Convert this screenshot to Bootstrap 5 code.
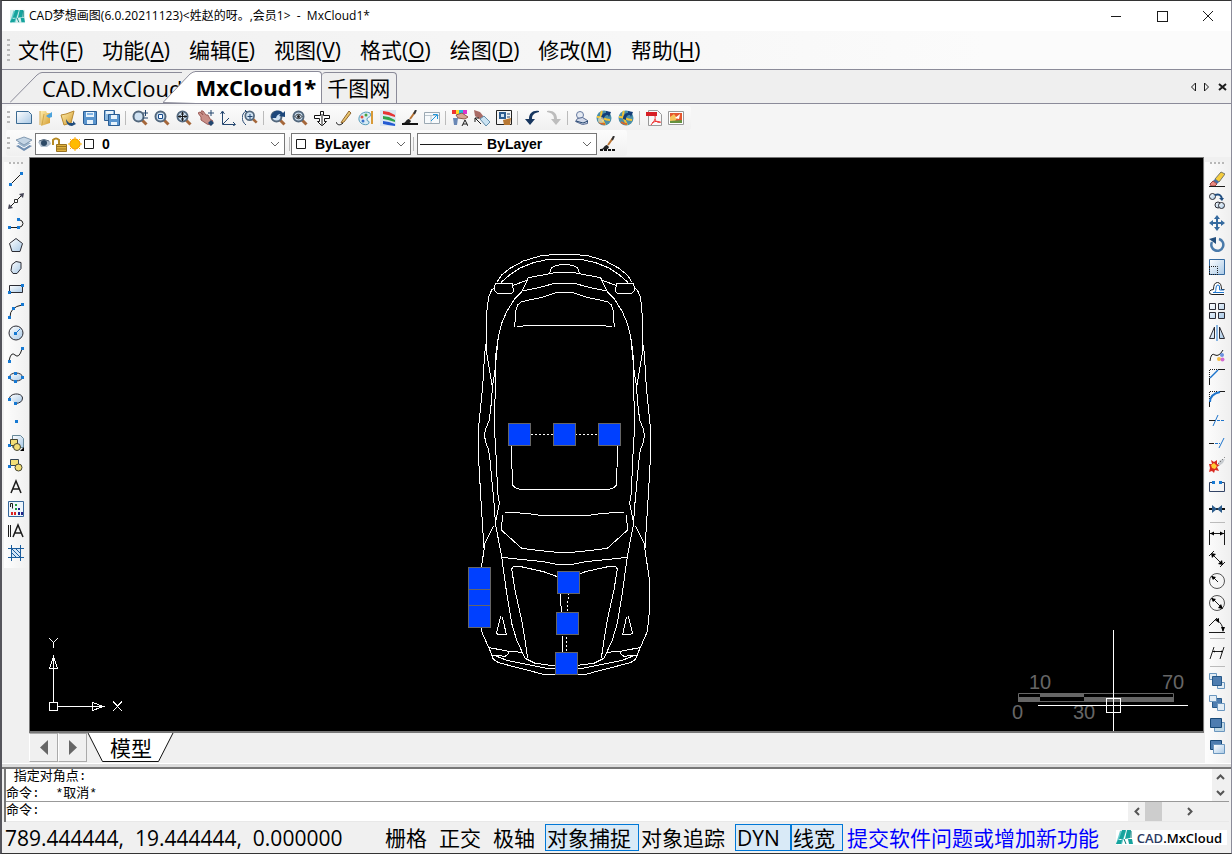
<!DOCTYPE html>
<html lang="zh-CN">
<head>
<meta charset="utf-8">
<meta name="viewport" content="width=device-width, initial-scale=1">
<title>CAD梦想画图 - MxCloud1*</title>
<link rel="stylesheet" href="https://cdn.jsdelivr.net/npm/bootstrap@5.3.0/dist/css/bootstrap.min.css">
<style>
body{font-family:"Open Sans","Noto Sans CJK SC",sans-serif;color:#000;background:#f0f0f0;overflow:hidden}
.win{border:1px solid #8b8b99;border-top-color:#333;border-left:2px solid #55555c;border-bottom-color:#333}
button{background:none;border:0;padding:0;color:inherit;font:inherit}
svg{display:block;flex:none}
.titlebar{height:30px;background:#fff;font-size:12px;padding-left:8px}
.titlebar button{width:46px;height:30px}
.menubar{height:38px;background:linear-gradient(90deg,#f0f0f0,#fbfbfb 80%);font-size:21px;line-height:38px;padding-left:5px;gap:19px}
.menubar .grip{margin-right:-11px}
.menubar a{color:#000;text-decoration:none}
.grip{width:3px;background:repeating-linear-gradient(#b8b8b8 0 2px,transparent 2px 5px)}
.hgrip{width:15px;height:2px;background:repeating-linear-gradient(90deg,#b8b8b8 0 2px,transparent 2px 4px)}
.tabstrip{height:35px;border-top:1px solid #8b8b99;border-bottom:1px solid #8b8b99;background:#efefef;padding-left:8px;font-size:22px}
.doc{height:31px;line-height:31px;white-space:nowrap}
.doc span{display:block;height:31px;border-top:1px solid #8b8b99}
.doc.active{margin-left:-19px;z-index:1;font-weight:700;height:32px}
.doc.active span{background:#fff;border-right:1px solid #8b8b99;height:32px;border-top-right-radius:4px;padding-right:5px}
.doc.box{font-size:21px}
.doc.box span{border-right:1px solid #8b8b99;border-radius:4px 4px 0 0;padding:0 6px 0 5px}
.bars{background:#f5f5f5;padding:2px 0 1px 4px;height:53px}
.bar{background:linear-gradient(#fcfcfc,#f0f0f0);border-radius:3px;height:24px;padding-left:1px}
.bar .grip{height:14px;margin-right:3px}
.bar.second{height:26px;padding-top:2px}
.tool{width:22px;height:22px;display:flex;align-items:center;justify-content:center}
.vsep{width:1px;height:14px;background:#bbb;margin:0 3px 0 2px}
.hsep{width:15px;height:1px;background:#bbb;margin:2px 0 3px}
.combo{background:#fff;border:1px solid #777;height:22px;padding-left:2px}
.combo select{appearance:none;border:0;background:transparent;font:bold 14px "Liberation Sans",sans-serif;outline:0;min-width:0;color:#000;padding:0}
.sidebar{width:27px;padding:5px 0 0 2px;background:#f0f0f0}
.sidebar .inner{background:linear-gradient(90deg,#fdfdfd,#f0f0f0);width:24px;padding-bottom:4px}
.sidebar.right{padding-left:1px}
.view{background:#000;border:1px solid #777;border-bottom-width:2px}
.sheets{height:30px}
.arrow{width:29px;height:29px;border:1px solid #aaa;border-left-color:#fff;display:flex;align-items:center;justify-content:center}
.sheet{font-size:21px;line-height:29px;height:30px;width:88px;position:relative;white-space:nowrap}
.sheet svg{position:absolute;inset:0}
.sheet span{position:relative}
.split{height:6px;background:#dcdcdc;border-top:1px solid #fff;border-bottom:2px solid #777}
.cmd{font:13px/17px "Liberation Mono","Noto Sans CJK SC",monospace;border-left:2px solid #777;margin-left:2px;margin-right:2px;background:#fff}
.log{height:33px;border-bottom:1px solid #999}
.log pre{font:inherit;overflow:hidden;margin:0}
.log .txt{margin-top:-1px}
.prompt{height:20px;border-bottom:1px solid #e8e8e8}
.prompt input{border:0;outline:0;font:inherit;min-width:0;background:transparent}
.sb{background:#f0f0f0}
.status{height:31px;font-size:21px;line-height:26px;white-space:pre;padding:2px 4px 2px 3px}
.status button{height:27px;padding:0 1px;border:1px solid transparent;white-space:nowrap}
.status button.on{background:#d9eaf7;border-color:#0078d7}
.status button.wide{padding-right:7px}
.status a{color:#00f;text-decoration:none}
.coord{width:378px}
.brandbox{background:#fff;font:600 13px/14px "Open Sans",sans-serif;height:15px;padding-right:5px}
.k{fill:none;stroke:#1c1c1c}.n{fill:none;stroke:#24466f}.b{fill:none;stroke:#1d74cc}.p{fill:#1679d3}
.w{fill:url(#sky);stroke:#2c2c34}.gl{fill:#cfe2f3;stroke:#53687d;stroke-width:2}.hd{fill:none;stroke:#a5673a;stroke-width:3}
.cad{fill:none;stroke:#fff;shape-rendering:crispEdges}
.cad *{vector-effect:non-scaling-stroke}
</style>
</head>
<body>
<svg width="0" height="0" class="position-absolute">
<defs>
<linearGradient id="sky" x1="0" y1="0" x2="1" y2="1"><stop offset="0" stop-color="#fff"/><stop offset="1" stop-color="#a9c9e6"/></linearGradient>
<linearGradient id="gold" x1="0" y1="0" x2="1" y2="1"><stop offset="0" stop-color="#fff0b0"/><stop offset="1" stop-color="#d39a2c"/></linearGradient>
<symbol id="lens" viewBox="0 0 16 16"><path class="hd" d="M10 10l4.500 4.500"/><circle class="gl" cx="6.500" cy="6.500" r="5"/></symbol>
<symbol id="brush" viewBox="0 0 16 16"><path d="M1 13c3 0 3-4 6-4l2 2c-1 3-4 3-8 2z" fill="#222"/><path d="M8 9l5-7" stroke="#b87333" stroke-width="2"/><path d="M12 4l2-4" stroke="#333" stroke-width="2"/></symbol>
<symbol id="globe" viewBox="0 0 16 16"><circle cx="8" cy="8" r="7.500" fill="#4b8fa9"/><path d="M1 7c5-1 6 3 13 3M6 1c-3 5 1 9 3 14" stroke="#f2c435" stroke-width="2" fill="none"/><path d="M3 12c3 2 3 2 6 2" stroke="#d66a2c" stroke-width="2"/><path d="M5 9c0-5 3-6 5-6V1l5 1-2 5-1-2c-3 0-4 2-4 5z" fill="#123d78"/></symbol>
<symbol id="eraser" viewBox="0 0 16 16"><path d="M6 8l6-7 4 2-6 8z" fill="#f5cc3c" stroke="#776"/><path d="M4 10l2-2 4 3-2 2z" fill="#456ea3"/><path d="M1 13l3-3 4 3-2 2H2z" fill="#e98980" stroke="#944"/><path class="k" d="M0 15.500h16"/></symbol>
<symbol id="logo" viewBox="0 0 17 15"><path d="M5 1L1 14M9 1L5 14" stroke="#6cc" stroke-width="2"/><path d="M6 0h4l-3 9H3zM11 0h4l-1 8-5 1zM2 10h4l-1 4H0zM12 9h4l1 5h-4z" fill="#16a39d"/><path d="M8 9l2 5M15 1v7" stroke="#087d7a"/></symbol>
</defs>
</svg>
<div class="win vh-100 d-flex flex-column">

<header class="titlebar d-flex align-items-center">
<svg width="15" height="15" viewBox="0 0 17 15"><rect width="17" height="15" fill="#d7efee"/><use href="#logo" width="17" height="15"/></svg>
<span class="flex-grow-1 ps-1 text-nowrap">CAD梦想画图(6.0.20211123)&lt;姓赵的呀。,会员1&gt;&nbsp; -&nbsp; MxCloud1*</span>
<button type="button" aria-label="最小化"><svg class="mx-auto" width="11" height="11"><path class="k" d="M0 5.500h10"/></svg></button>
<button type="button" aria-label="最大化"><svg class="mx-auto" width="11" height="11"><rect class="k" x=".5" y=".5" width="10" height="10"/></svg></button>
<button type="button" aria-label="关闭"><svg class="mx-auto" width="11" height="11"><path class="k" d="M0 0l10 10M10 0L0 10"/></svg></button>
</header>

<nav class="menubar d-flex align-items-stretch">
<i class="grip my-2"></i>
<a href="#">文件(<u>F</u>)</a><a href="#">功能(<u>A</u>)</a><a href="#">编辑(<u>E</u>)</a><a href="#">视图(<u>V</u>)</a><a href="#">格式(<u>O</u>)</a><a href="#">绘图(<u>D</u>)</a><a href="#">修改(<u>M</u>)</a><a href="#">帮助(<u>H</u>)</a>
</nav>

<div class="tabstrip d-flex align-items-end">
<button type="button" class="doc d-flex"><svg width="32" height="31"><path class="k" style="stroke:#8b8b99" d="M0 30.500L27 3q3-2.500 5-2.500"/></svg><span>CAD.MxCloud</span></button>
<button type="button" class="doc active d-flex position-relative"><svg width="32" height="32"><path fill="#fff" stroke="#8b8b99" d="M0 31.500L27 3q3-2.500 6-2.500v32z"/></svg><span>MxCloud1*</span></button>
<button type="button" class="doc box d-flex"><span>千图网</span></button>
<div class="ms-auto d-flex align-self-center gap-2 pe-1">
<button type="button" aria-label="上一个"><svg width="6" height="10"><path class="k" d="M5.500 1v8l-4-4z"/></svg></button>
<button type="button" aria-label="下一个"><svg width="6" height="10"><path class="k" d="M.5 1v8l4-4z"/></svg></button>
<button type="button" aria-label="关闭标签"><svg width="9" height="10"><path class="k" stroke-width="2" d="M1 2l7 6M8 2L1 8"/></svg></button>
</div>
</div>

<div class="bars">
<div class="d-flex"><div class="bar d-flex align-items-center">
<i class="grip"></i>
<button class="tool" aria-label="新建"><svg width="16" height="16"><path d="M.5 1.500h12l3 3v9H.5z" fill="url(#sky)" stroke="#3b6a92"/></svg></button>
<button class="tool" aria-label="打开"><svg width="16" height="16"><path d="M2 1h6l1 2h3v10l-9 3z" fill="url(#gold)"/><path d="M2 1v14M6 4l-2 11" stroke="#d2a74b"/><path d="M8 6l6-4v5l-3 1z" fill="#4da3dc"/></svg></button>
<button class="tool" aria-label="打开云图"><svg width="16" height="16"><path d="M1 5l5-1 8-3-3 12-7 2z" fill="url(#gold)" stroke="#b78932"/><path d="M6 9c3 5 4 4 7 4v-2l3 3-4 2c-4 0-6-3-6-7z" fill="#214d7c"/></svg></button>
<button class="tool" aria-label="保存"><svg width="16" height="16"><path d="M1.500 1.500h13v13h-12l-1-1z" fill="#5a95ce" stroke="#2a5d94"/><path fill="#e8f3fb" d="M4 2h8v5H4zM5 10h6v4H5z"/><path class="b" d="M5 4h6"/></svg></button>
<button class="tool" aria-label="另存为"><svg width="16" height="16"><path d="M.5.500h10v10H.5z" fill="#8eb9df" stroke="#2a5d94"/><path d="M4.500 4.500h11v11h-11z" fill="#5a95ce" stroke="#2a5d94"/><path fill="#e8f3fb" d="M2 1h7v3H2zM7 5h6v4H7zM7 12h6v3H7z"/></svg></button>
<i class="vsep"></i>
<button class="tool" aria-label="实时缩放"><svg width="16" height="16"><use href="#lens"/><path class="n" d="M11 3h5M13.500 0v6M11 8h5"/></svg></button>
<button class="tool" aria-label="窗口缩放"><svg width="16" height="16"><use href="#lens"/><path fill="#fff" stroke="#164b8c" d="M4.500 4.500h4v4h-4z"/></svg></button>
<button class="tool" aria-label="范围缩放"><svg width="16" height="16"><use href="#lens"/><path class="k" d="M6.500 2v9M2 6.500h9M5 4h3M5 9h3M4 5v3M9 5v3"/></svg></button>
<button class="tool" aria-label="平移"><svg width="16" height="16"><path d="M0 3l2-1 3 3-2-4 2 0 3 4 2 0 2 4 3 2-2 4-4-1-6-4 0-3z" fill="#c98f88" stroke="#9b5d59"/><path d="M10 13l3-3 3 3-3 3z" fill="#22456e"/><path class="n" d="M10 3h6M13 0v6"/></svg></button>
<button class="tool" aria-label="坐标系"><svg width="16" height="16"><path class="n" d="M2.500 2v12.500H15M3 14l6-6M.5 4l2-3 2 3M13 12l2.500 2.500L13 16"/></svg></button>
<button class="tool" aria-label="动态观察"><svg width="16" height="16"><use href="#lens" x="2" y="0" width="14" height="14"/><path class="n" d="M4 1C-1 4-1 11 4 15M8 4v5M5.500 6.500h5M3 0l2 2"/></svg></button>
<i class="vsep"></i>
<button class="tool" aria-label="上一视图"><svg width="16" height="16"><use href="#lens"/><path d="M2 4c4-5 9-4 11-1l2-2v6l-6-1 2-2C8 4 7 5 6 8L1 8z" fill="#1c477b"/></svg></button>
<button class="tool" aria-label="查找"><svg width="16" height="16"><use href="#lens"/><path class="k" d="M3 6.500c2-3 5-3 7 0-2 3-5 3-7 0z"/><circle cx="6.500" cy="6.500" r="1.500" fill="#222"/></svg></button>
<button class="tool" aria-label="测量"><svg width="16" height="16"><path d="M6.500 1.500h3v4h6v3h-5v3h2l-4 4h-1l-4-4h2v-3h-5v-3h6z" fill="#fff" stroke="#111"/><path class="k" d="M8 4v11"/></svg></button>
<button class="tool" aria-label="铅笔"><svg width="16" height="16"><path d="M6 11L13 1l2 2-7 9-3 1z" fill="url(#gold)" stroke="#8f6530"/><path class="k" d="M0 12c1 3 4 4 7 1"/></svg></button>
<button class="tool" aria-label="调色板"><svg width="16" height="16"><path d="M12 3C6 0 0 5 1 10s9 6 10 3-3-1-2-4 5-1 3-6z" fill="#d8ebf4" stroke="#559bb9"/><circle cx="4" cy="7" r="1.500" fill="#e64d3b"/><circle cx="8" cy="5" r="1.500" fill="#4aa23e"/><circle cx="5" cy="11" r="1.500" fill="#3972cc"/><path d="M14 1v13" stroke="#d89a38" stroke-width="2"/></svg></button>
<button class="tool" aria-label="图层"><svg width="16" height="16"><path fill="#dbe7f1" d="M0 0h16v16H0z"/><path d="M3 1l6 1 6 3v2L8 5 3 4z" fill="#e73535"/><path d="M3 6l6 1 6 3v2l-7-2-5-1z" fill="#2fa34a"/><path d="M3 11l6 1 6 2v2l-7-1-5-1z" fill="#235ad2"/></svg></button>
<button class="tool" aria-label="特性刷"><svg width="16" height="16"><use href="#brush"/><path d="M0 14h16" stroke="#111" stroke-width="2"/></svg></button>
<button class="tool" aria-label="缩放窗口"><svg width="16" height="16"><path fill="#f7fafc" stroke="#9ba8b2" d="M.5 2.500h15v11H.5z"/><path stroke="#bcc6ce" d="M1 5.500h14M7 6v7"/><path stroke="#2496d8" d="M7 11l6-6M9 4.500h4.500V9" fill="none"/></svg></button>
<i class="vsep"></i>
<button class="tool" aria-label="颜色替换"><svg width="16" height="16"><path fill="#e33" d="M0 0h4v4H0z"/><path fill="#fd2" d="M4 0h3v4H4z"/><path fill="#2bd" d="M7 0h4v4H7z"/><path fill="#d3c" d="M11 0h4v4h-4z"/><path d="M4 5l6-2 6 4-3 2-7-1z" fill="#d9a290" stroke="#8e584c"/><path d="M1 8h5l-1 7H2z" fill="#6987b5"/><path class="k" d="M10 16l3-6 3 6M11 14h4"/></svg></button>
<button class="tool" aria-label="橡皮"><svg width="16" height="16"><path d="M0 0l6 2 4 5-3 3-6-4z" fill="#a96c66"/><path d="M6 9l4-3 6 6-4 4z" fill="#cbe3f2" stroke="#6590ad"/><path class="k" d="M1 8l6 6M1 12V8h4"/></svg></button>
<button class="tool" aria-label="图块编辑"><svg width="16" height="16"><path fill="#f4f4f4" stroke="#222" d="M.5.500h15v14H.5z"/><path fill="#2d5d91" d="M3 2h7v7H3z"/><path fill="#cfe2f3" d="M5 4h3v3H5z"/><path class="n" d="M11 4h3M11 7h3"/><path d="M7 10l8-2-1 7H8z" fill="#b77733"/></svg></button>
<i class="vsep"></i>
<button class="tool" aria-label="撤销"><svg width="16" height="16"><path d="M15 1C9 0 5 3 5 9H1l5 6 5-6H8c0-4 2-6 7-7z" fill="#17365f"/></svg></button>
<button class="tool" aria-label="重做"><svg width="16" height="16"><path d="M1 1c6-1 10 2 10 8h4l-5 6-5-6h3c0-4-2-6-7-7z" fill="#bdbdbd"/></svg></button>
<i class="vsep"></i>
<button class="tool" aria-label="打印"><svg width="16" height="16"><circle cx="6" cy="5" r="3.500" fill="#e5eaf2" stroke="#667aa0"/><path d="M3.500 8.500l5-1 5 3v3l-5 1-7-3z" fill="#d3daea" stroke="#556991"/><path class="n" d="M2 11l7 2 5-2"/></svg></button>
<button class="tool" aria-label="上传"><svg width="16" height="16"><use href="#globe"/><circle cx="5" cy="10" r="3" fill="#efe3b5" opacity=".7"/></svg></button>
<button class="tool" aria-label="下载"><svg width="16" height="16"><use href="#globe"/></svg></button>
<i class="vsep"></i>
<button class="tool" aria-label="PDF"><svg width="16" height="16"><path d="M2.500.500h9l4 4v11h-13z" fill="#f8f8f8" stroke="#999"/><path fill="#d71e24" d="M0 2h11v4H0z"/><path d="M9 6c1 4-2 6-4 9M9 9c1 3 3 4 6 3M6 13c3-2 5-2 8-1" stroke="#e33" fill="none"/></svg></button>
<button class="tool me-1" aria-label="图片"><svg width="16" height="16"><path fill="#fff" stroke="#999" d="M.5 1.500h15v13H.5z"/><path fill="#e4572f" d="M2 3h12v10H2z"/><path fill="#f6c35c" d="M2 7l4-3 3 4-3 5H2z"/><path fill="#65923f" d="M2 11l12-1v3H2z"/><path fill="#fff" d="M7 8l5-4-1 5z"/></svg></button>
</div></div>
<div class="d-flex"><div class="bar second d-flex align-items-center">
<i class="grip"></i>
<button class="tool" aria-label="图层管理"><svg width="16" height="16"><path d="M0 10l8-3 8 3-8 5z" fill="#6e8db0"/><path d="M0 7l8-3 8 3-8 5z" fill="#9bb4cd" stroke="#fff"/><path d="M0 4l8-3 8 3-8 5z" fill="#c4d5e5" stroke="#8299b0"/></svg></button>
<div class="combo d-flex align-items-center" style="width:250px">
<svg width="13" height="12"><path d="M0 4l5-3 7 2 1 3-4 3H3z" fill="#b2c0cf"/><circle cx="6" cy="5" r="3" fill="#2d4965"/><path d="M1 3q5-3 10 0" stroke="#5b6e82" fill="none"/></svg>
<svg width="17" height="15"><path d="M2 8V3q3-3 6 0v4" stroke="#b68a24" stroke-width="2" fill="none"/><path fill="#dfb13d" stroke="#9b7421" d="M5.500 7.500h10v7h-10z"/><path stroke="#9b7421" d="M6 9.500h9M6 12h9"/></svg>
<svg width="14" height="14"><circle cx="7" cy="7" r="5" fill="#fb0" stroke="#f08c00"/><path d="M7 0v14M0 7h14M2 2l10 10M12 2L2 12" stroke="#fb0"/></svg>
<svg width="16" height="14"><path class="k" d="M2.500 2.500h9v9h-9z"/></svg>
<select class="flex-grow-1 ps-1" aria-label="图层"><option>0</option></select>
<svg width="14" height="10"><path class="k" style="stroke:#666" d="M1 3l4 4 4-4"/></svg>
</div>
<i class="vsep mx-1" style="margin-right:1px!important"></i>
<div class="combo d-flex align-items-center" style="width:120px">
<svg width="21" height="14"><path class="k" d="M2.500 2.500h9v9h-9z"/></svg>
<select class="flex-grow-1" aria-label="颜色"><option>ByLayer</option></select>
<svg width="14" height="10"><path class="k" style="stroke:#666" d="M1 3l4 4 4-4"/></svg>
</div>
<i class="vsep"></i>
<div class="combo d-flex align-items-center" style="width:180px">
<svg width="67" height="3"><path class="k" d="M0 1.500h62"/></svg>
<select class="flex-grow-1" aria-label="线型"><option>ByLayer</option></select>
<svg width="14" height="10"><path class="k" style="stroke:#666" d="M1 3l4 4 4-4"/></svg>
</div>
<button class="tool me-2" aria-label="线型刷"><svg width="16" height="16"><use href="#brush"/><path d="M0 14h16" stroke="#111" stroke-width="2" stroke-dasharray="3 1"/></svg></button>
</div></div>
</div>

<main class="d-flex flex-grow-1" style="min-height:0">
<aside class="sidebar flex-shrink-0"><div class="inner d-flex flex-column align-items-center">
<i class="hgrip mb-1"></i>
<button class="tool" aria-label="直线"><svg width="16" height="16"><path class="k" d="M2 14L14 2"/><path class="p" d="M1 12h3v3H1zM12 1h3v3h-3z"/></svg></button>
<button class="tool" aria-label="构造线"><svg width="16" height="16"><path class="k" d="M2 14L14 2"/><path d="M0 16l1-5 4 4zM16 0l-1 5-4-4z" fill="#445"/><path fill="#fff" stroke="#333" d="M6.500 6.500h3v3h-3z"/></svg></button>
<button class="tool" aria-label="多段线"><svg width="16" height="16"><path class="k" d="M1 12.500h10q4-1 4-4t-4-4"/><path class="p" d="M0 11h3v3H0zM9 11h3v3H9zM9 3h3v3H9z"/></svg></button>
<button class="tool" aria-label="正多边形"><svg width="16" height="16"><path class="w" d="M8 1.500l6.500 5-2.500 8H4l-2.500-8z"/></svg></button>
<button class="tool" aria-label="多边形"><svg width="16" height="16"><path class="w" d="M8 2.500l5 1v6l-4 5H5l-2-3 1-6z"/></svg></button>
<button class="tool" aria-label="矩形"><svg width="16" height="16"><path class="w" d="M1.500 4.500h13v7h-13z"/><path class="p" d="M0 10h3v3H0zM13 3h3v3h-3z"/></svg></button>
<button class="tool" aria-label="圆弧"><svg width="16" height="16"><path class="k" d="M2 14q0-10 12-12"/><path class="p" d="M0 13h3v3H0zM4 4h3v3H4zM13 0h3v3h-3z"/></svg></button>
<button class="tool" aria-label="圆"><svg width="16" height="16"><circle class="w" cx="8" cy="8" r="7"/><path class="b" d="M8 8l4-4"/><path class="p" d="M6 7h3v3H6z"/></svg></button>
<button class="tool" aria-label="样条曲线"><svg width="16" height="16"><path class="k" d="M1 14q2-10 6-6t7-6"/><path class="p" d="M0 13h3v3H0zM13 0h3v3h-3z"/></svg></button>
<button class="tool" aria-label="椭圆"><svg width="16" height="16"><ellipse class="w" cx="8" cy="8" rx="6.500" ry="4"/><path class="p" d="M0 7h3v3H0zM13 7h3v3h-3zM6 3h3v3H6zM6 11h3v3H6z"/></svg></button>
<button class="tool" aria-label="椭圆弧"><svg width="16" height="16"><path class="w" d="M1.500 8C1 2 14 1 14.500 7q0 5-7 5.500"/><path class="p" d="M0 7h3v3H0zM6 11h3v3H6z"/></svg></button>
<button class="tool" aria-label="点"><svg width="16" height="16"><path class="p" d="M7 7h3v3H7z"/></svg></button>
<button class="tool" aria-label="插入块"><svg width="16" height="16"><path class="w" style="stroke:#689" d="M4.500.500h8l3 3v9h-11z"/><path d="M2.500 4.500h7v6h-7z" fill="#f3df77" stroke="#443"/><circle cx="9" cy="12" r="3.500" fill="#f3df77" stroke="#443"/><path class="p" d="M0 9h3v3H0z"/><path d="M16 12v4h-4z"/></svg></button>
<button class="tool" aria-label="创建块"><svg width="16" height="16"><path d="M2.500 2.500h8v6h-8z" fill="#f3df77" stroke="#345"/><circle cx="10.500" cy="10.500" r="3.500" fill="#f3df77" stroke="#443"/><path class="p" d="M0 8h3v3H0z"/></svg></button>
<button class="tool" aria-label="单行文字"><svg width="16" height="16"><path class="k" stroke-width="1.500" d="M3 14L8 2l5 12M5 10h6"/></svg></button>
<button class="tool" aria-label="图案"><svg width="16" height="16"><path fill="#eef5fc" stroke="#36679b" d="M.5.500h15v15H.5z"/><path class="k" d="M2.500 6V2.500h2v5"/><path fill="#d22" d="M3 11h2v3H3zM6 11h2v3H6z"/><path fill="#294" d="M7 3h2v2H7zM7 7h2v2H7z"/><path fill="#228" d="M10 7h2v2h-2zM10 11h2v3h-2zM13 11h2v3h-2z"/></svg></button>
<button class="tool" aria-label="多行文字"><svg width="16" height="16"><path class="k" d="M.5 2v12M2.500 2v12"/><path class="k" stroke-width="1.500" d="M5 14l5-12 5 12M7 10h6"/></svg></button>
<button class="tool" aria-label="填充"><svg width="16" height="16"><path d="M3 3h10v10H3z" fill="#d3e5f7"/><path stroke="#1c5d9c" fill="none" d="M0 3.500h16M0 12.500h16M3.500 0v16M12.500 0v16M4 4l8 8M4 8l4 4M8 4l4 4"/></svg></button>
</div></aside>

<section class="d-flex flex-column flex-grow-1" style="min-width:0">
<div class="view flex-grow-1" style="min-height:0">
<svg class="w-100 h-100" viewBox="30 158 1173 573" role="img" aria-label="汽车平面图">
<g class="cad" transform="translate(460 240) scale(.3333)">
<g id="halfcar">
<path d="M112 125L125 105 150 85 190 63 240 48 285 43H314M122 128L150 104 180 84 220 68 265 58H314M268 101L274 84 290 76 314 73M157 137L200 121M186 154L205 113 260 103 290 97H314M186 153L240 142 280 131H314M164 260L168 210 173 195 185 185 250 171 285 159 314 157M172 259L210 257H314"/>
<path d="M106 130H157L161 155 154 160H112L103 150ZM106 142L95 150 86 170 81 210 80 300 74 340 68 440 62 500 56 560V660L64 800 72 925"/>
<path d="M186 154L165 175 140 215 125 250 115 290 108 340 107 400 103 560 109 660 113 760 118 790 106 850M80 300V340L90 400 97 440 95 480 88 540 76 570 74 585 76 605 86 630 90 660 104 810 106 850 125 950 140 1060 155 1150 170 1200 195 1255 225 1270 280 1277H314M115 290L104 400 97 440"/>
<path d="M155 617V660L158 735 165 743 180 748H314M135 817L200 820 240 826H314M128 825L124 870 185 925 240 932 290 937H314M125 952L170 957 250 965 290 973H314M292 1012L285 1007 250 995 178 979 160 980 155 987 165 1050 185 1140 195 1200 203 1255"/>
<path d="M101 858L75 910 69 950 60 1010 58 1060 60 1130 65 1175 87 1225 100 1258 115 1268 200 1290 250 1303H314M122 1128L109 1180 118 1185H132L139 1183 127 1130M88 1223L145 1234 185 1237M145 1235V1242L135 1249 95 1245 88 1223M105 1247L140 1261 200 1273 260 1285 314 1287"/>
</g>
<use href="#halfcar" transform="translate(627 0) scale(-1 1)"/>
<path d="M302 1060L304 1130 308 1240"/>
<path stroke-dasharray="2 2" d="M178 583H450M325 1060L318 1240"/>
<g fill="#0040ff" stroke="#666"><path d="M146 550h66v66h-66zM281 550h66v66h-66zM416 550h66v66h-66zM293 994h66v66h-66zM290 1118h66v66h-66zM287 1238h66v66h-66zM26 982h66v180H26zM26 1048h66M26 1096h66"/></g>
</g>
<g class="cad"><path d="M53.500 702V668M49.500 668.500L53.500 656.500 57.500 668.500ZM53.500 658V668M49.500 702.500h8v8h-8zM58 706.500H92M92.500 702.500L103.500 706.500 92.500 710.500ZM92 706.500H103M49 638L53.500 642.500V648M58 638L53.500 642.500M113 701.500L122 711M122 701.500L113 711"/></g>
<g fill="#666" font-family="Liberation Sans" font-size="20"><text x="1029" y="689">10</text><text x="1162" y="689">70</text><text x="1012" y="719">0</text><text x="1073" y="719">30</text></g>
<path d="M1018.500 693.500h155v8h-155z" fill="none" stroke="#666"/><path fill="#666" d="M1018 697h22v5h-22zM1040 693h44v4h-44zM1084 697h90v5h-90z"/>
<path class="cad" d="M1113.500 630V731M1038 705.500H1188M1106.500 698.500h14v14h-14z"/>
</svg>
</div>
<div class="sheets d-flex">
<button type="button" class="arrow" aria-label="上一布局"><svg width="8" height="15"><path fill="#666" d="M8 0v15L0 7.500z"/></svg></button>
<button type="button" class="arrow" aria-label="下一布局"><svg width="8" height="15"><path fill="#666" d="M0 0v15l8-7.500z"/></svg></button>
<button type="button" class="sheet"><svg width="88" height="30"><path fill="#fff" stroke="#111" d="M1 0L15.500 28.500H71.500L86 0"/></svg><span>模型</span></button>
</div>
</section>

<aside class="sidebar right flex-shrink-0"><div class="inner d-flex flex-column align-items-center h-100">
<i class="hgrip mb-1"></i>
<button class="tool" aria-label="删除"><svg width="16" height="16"><use href="#eraser"/></svg></button>
<button class="tool" aria-label="复制"><svg width="16" height="16"><g class="w"><circle cx="3.500" cy="3.500" r="3"/><circle cx="9" cy="12" r="3"/><circle cx="12.500" cy="12.500" r="3"/></g><path d="M6 2q6-2 7 4" stroke="#1f4d80" fill="none" stroke-width="2"/><path d="M10 5h5l-2 3z" fill="#1f4d80"/></svg></button>
<button class="tool" aria-label="移动"><svg width="16" height="16"><path d="M8 0l3 4H9v3h3V5l4 3-4 3V9H9v3h2l-3 4-3-4h2V9H4v2L0 8l4-3v2h3V4H5z" fill="#356a9f"/></svg></button>
<button class="tool" aria-label="旋转"><svg width="16" height="16"><path d="M3 5a6 6 0 1 0 7-3" stroke="#4a7aaa" stroke-width="2.500" fill="none"/><path d="M0 2l7-2v7z" fill="#244f7d"/></svg></button>
<button class="tool" aria-label="缩放"><svg width="16" height="16"><path fill="url(#sky)" stroke="#356a9f" d="M.5.500h15v15H.5z"/><path class="k" stroke-dasharray="1 1" d="M0 7.500h8.500V16M.5 8v8M0 15.500h8"/></svg></button>
<button class="tool" aria-label="偏移"><svg width="16" height="16"><path fill="#fff" stroke="#222" d="M15 13.500H3q-3 0-2.500-3 1-2 4-2 0-7 4-7t4 7h3"/><path class="b" d="M15 11.500H4M6 11q1-1 1-4t2-3 1.500 3 1.500 2h3"/></svg></button>
<button class="tool" aria-label="阵列"><svg width="16" height="16"><path class="w" d="M.5.500h6v6h-6zM9.500.500h6v6h-6zM.5 9.500h6v6h-6zM9.500 9.500h6v6h-6z"/></svg></button>
<button class="tool" aria-label="镜像"><svg width="16" height="16"><path class="w" d="M5.500 2v11.500h-5zM10.500 2v11.500h5z"/><path class="b" d="M8 0v16"/></svg></button>
<button class="tool" aria-label="编辑曲线"><svg width="16" height="16"><path class="k" d="M1 14q1-9 5-6 4 2 8-5"/><circle cx="10" cy="12" r="2" fill="#f3bd45"/><circle cx="13.500" cy="12.500" r="2" fill="#d36bd1"/><circle cx="13" cy="8" r="2" fill="#6b92e0"/></svg></button>
<button class="tool" aria-label="倒角"><svg width="16" height="16"><path class="k" stroke-dasharray="1 1" d="M.5 8V.5H8"/><path class="k" d="M.5 16V9M9 .5h7"/><path class="b" stroke-width="1.500" d="M1 9l8-8"/></svg></button>
<button class="tool" aria-label="圆角"><svg width="16" height="16"><path class="k" stroke-dasharray="1 1" d="M.5 8V.5H8"/><path class="k" d="M.5 16V10M10 .5h6"/><path class="b" stroke-width="2" d="M1 11q0-8 10-10"/></svg></button>
<button class="tool" aria-label="修剪"><svg width="16" height="16"><path class="k" d="M0 7.500h6"/><path class="b" d="M4 13L9 2"/><path class="b" stroke-dasharray="3 1" d="M8 7.500h8"/></svg></button>
<button class="tool" aria-label="延伸"><svg width="16" height="16"><path class="k" d="M0 8.500h5"/><path class="b" stroke-dasharray="3 1" d="M6 8.500h5"/><path class="b" d="M10 13l5-10"/></svg></button>
<button class="tool" aria-label="分解"><svg width="16" height="16"><path d="M0 7l3 0-1-4 3 2 3-2 0 4 3 1-3 2 2 4-4-1-1 3-2-2-3 1 1-4z" fill="#d92c22"/><path d="M2 8l3-2 3 3-2 3-3-1z" fill="#fc3"/><path d="M9 6l2-3 5-1-2 4-4 3z" fill="#c8ccd0"/><path stroke="#555" stroke-dasharray="1 2" d="M9 7l7-7"/></svg></button>
<button class="tool" aria-label="打断"><svg width="16" height="16"><path fill="none" stroke="#346" d="M3 3.500H.5v9h15v-9H13"/><path class="p" d="M3 2h3v3H3zM10 2h3v3h-3z"/></svg></button>
<button class="tool" aria-label="合并"><svg width="16" height="16"><path stroke="#111" stroke-width="2" d="M0 8h16"/><path d="M3 4l5 4-5 4zM13 4L8 8l5 4z" fill="#2b5c8c"/></svg></button>
<i class="hsep"></i>
<button class="tool" aria-label="线性标注"><svg width="16" height="16"><path class="k" d="M.5 1v15M15.500 1v15M1 4.500h14"/><path d="M1 4.500l4-2v4zM15 4.500l-4-2v4z"/></svg></button>
<button class="tool" aria-label="对齐标注"><svg width="16" height="16"><path class="k" d="M0 5l5-5M11 16l5-5M3 3l10 10"/><path d="M2 2l5 1-4 4zM14 14l-5-1 4-4z"/></svg></button>
<button class="tool" aria-label="半径标注"><svg width="16" height="16"><circle class="k" style="stroke:#555" cx="8" cy="8" r="7.500"/><path class="k" d="M3 3l6 6"/><path d="M2 3l5 1-3 3z"/></svg></button>
<button class="tool" aria-label="直径标注"><svg width="16" height="16"><circle class="k" style="stroke:#555" cx="8" cy="8" r="7.500"/><path class="k" d="M3 3l10 10"/><path d="M2 3l5 1-3 3zM14 14l-5-1 3-4z"/></svg></button>
<button class="tool" aria-label="角度标注"><svg width="16" height="16"><path class="k" d="M0 15.500h16M0 9l8-8M8 3q6 4 6 11"/><path d="M6 3l4-2v5zM12 10h4l-2 5z"/></svg></button>
<i class="hsep"></i>
<button class="tool" aria-label="编辑标注"><svg width="16" height="16"><path class="k" d="M1 14L5 2M11 14l4-12M4 6.500h10"/><path d="M4 6.500l2-1v2zM14 6.500l-2-1v2z"/></svg></button>
<i class="hsep"></i>
<button class="tool" aria-label="前置"><svg width="16" height="16"><path fill="#e3edf5" stroke="#6a96be" d="M.5.500h7v6h-7zM8.500 9.500h7v6h-7z"/><path fill="#4e7db0" stroke="#275989" d="M3.500 3.500h9v9h-9z"/></svg></button>
<button class="tool" aria-label="后置"><svg width="16" height="16"><path fill="#4e7db0" stroke="#275989" d="M3.500 3.500h9v9h-9z"/><path fill="#e3edf5" stroke="#6a96be" d="M.5.500h7v6h-7zM8.500 8.500h7v7h-7z"/></svg></button>
<button class="tool" aria-label="置于之上"><svg width="16" height="16"><path fill="#c1d9e6" stroke="#6a96be" d="M5.500 5.500h10v9h-10z"/><path fill="#4e7db0" stroke="#174876" d="M1.500 1.500h11v9h-11z"/></svg></button>
<button class="tool" aria-label="置于之下"><svg width="16" height="16"><path fill="#4e7db0" stroke="#174876" d="M1.500 1.500h11v9h-11z"/><path fill="url(#sky)" stroke="#6a96be" d="M4.500 5.500h11v9h-11z"/></svg></button>
</div></aside>
</main>

<div class="split flex-shrink-0"></div>
<section class="cmd flex-shrink-0">
<div class="log d-flex"><div class="txt flex-grow-1"><pre> 指定对角点:
命令:  *取消*</pre></div>
<div class="sb d-flex flex-column justify-content-between align-items-center py-1" style="width:17px"><svg width="9" height="7"><path stroke="#555" stroke-width="2" fill="none" d="M1 6l3.500-3.500L8 6"/></svg><svg width="9" height="7"><path stroke="#555" stroke-width="2" fill="none" d="M1 1l3.500 3.500L8 1"/></svg></div></div>
<div class="prompt d-flex"><label for="cmdline">命令:</label><input id="cmdline" class="flex-grow-1" type="text">
<div class="sb d-flex align-items-center justify-content-between" style="width:71px;padding:0 5px"><svg width="7" height="9"><path stroke="#555" stroke-width="2" fill="none" d="M6 1L2.500 4.500 6 8"/></svg><i class="h-100" style="width:17px;background:#cdcdcd;margin-right:20px"></i><svg width="7" height="9"><path stroke="#555" stroke-width="2" fill="none" d="M1 1l3.500 3.500L1 8"/></svg></div>
<div class="sb" style="width:30px"></div></div>
</section>

<footer class="status d-flex align-items-center flex-shrink-0"><span class="coord">789.444444,  19.444444,  0.000000</span><button type="button" class="me-2">栅格</button><button type="button" class="me-2">正交</button><button type="button" class="me-2">极轴</button><button type="button" class="on wide">对象捕捉</button><button type="button" class="me-2">对象追踪</button><button type="button" class="on text-start" style="width:56px">DYN</button><button type="button" class="on wide">线宽</button><a href="#" class="ms-1">提交软件问题或增加新功能</a><span class="brandbox d-flex align-items-center ms-auto"><svg width="17" height="15"><use href="#logo"/></svg><span class="ms-1"><span style="color:#2d3b63">CAD</span>.MxCloud</span></span></footer>
</div>
<script src="https://cdn.jsdelivr.net/npm/bootstrap@5.3.0/dist/js/bootstrap.bundle.min.js"></script>
</body>
</html>
